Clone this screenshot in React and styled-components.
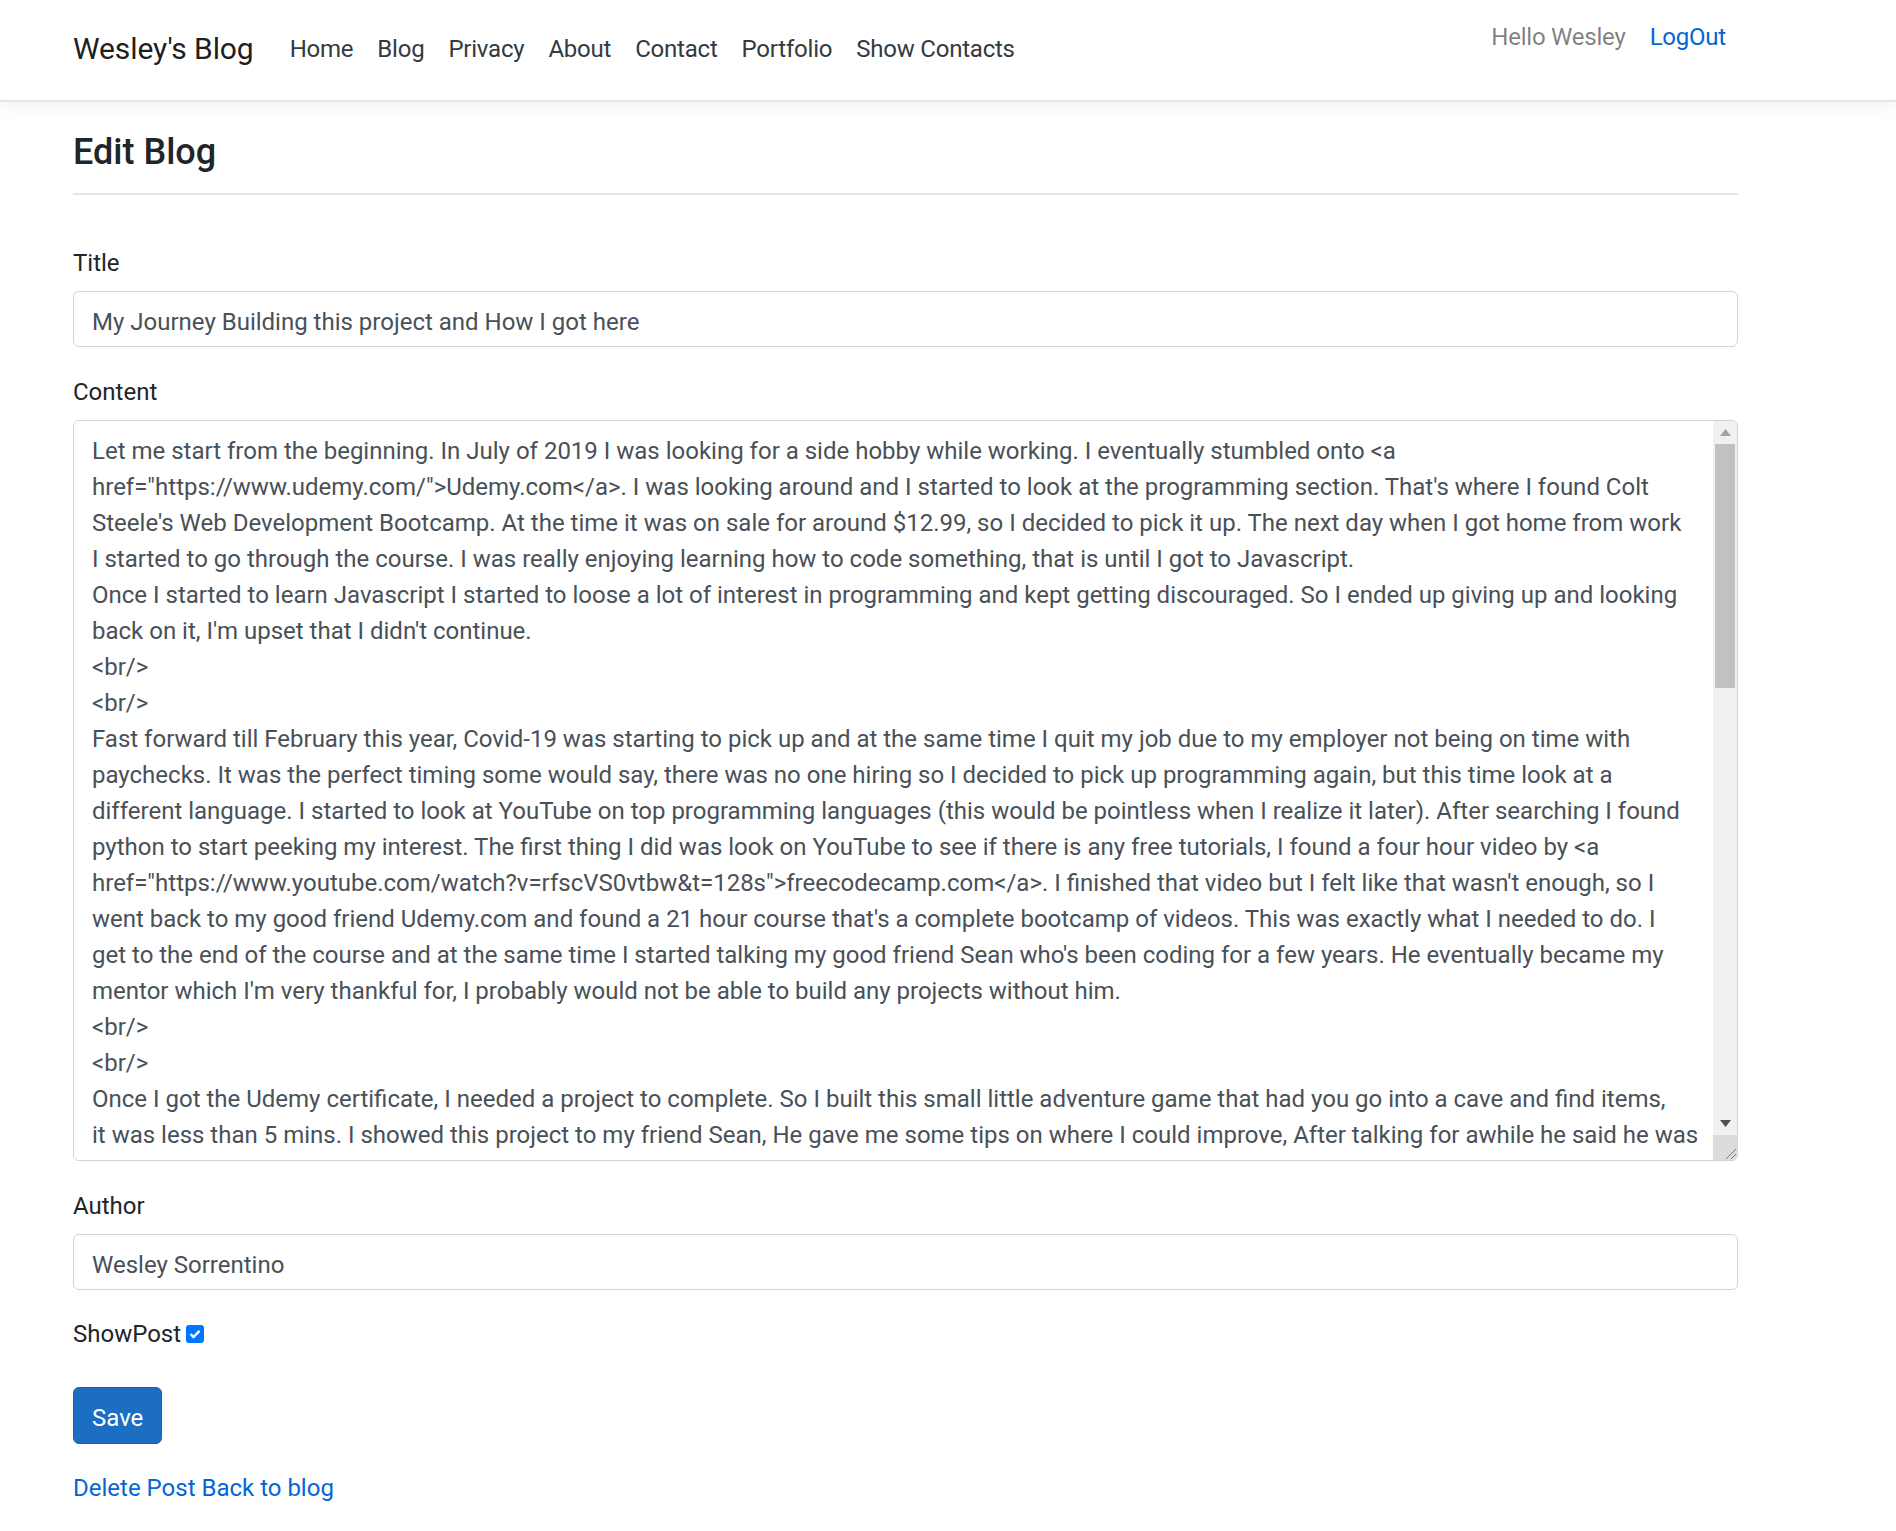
import React from "react";
import styled, { createGlobalStyle } from "styled-components";

const GlobalStyle = createGlobalStyle`
  body {
    margin: 0;
    background: #fff;
    color: #212529;
    font-family: Roboto, "Segoe UI", "Noto Sans", Arial, sans-serif;
    font-size: 24px;
    line-height: 1.5;
  }
  * { box-sizing: border-box; }
`;

const blogText = [
  `Let me start from the beginning. In July of 2019 I was looking for a side hobby while working. I eventually stumbled onto <a`,
  `href="https://www.udemy.com/">Udemy.com</a>. I was looking around and I started to look at the programming section. That's where I found Colt`,
  `Steele's Web Development Bootcamp. At the time it was on sale for around $12.99, so I decided to pick it up. The next day when I got home from work`,
  `I started to go through the course. I was really enjoying learning how to code something, that is until I got to Javascript.`,
  `Once I started to learn Javascript I started to loose a lot of interest in programming and kept getting discouraged. So I ended up giving up and looking`,
  `back on it, I'm upset that I didn't continue.`,
  `<br/>`,
  `<br/>`,
  `Fast forward till February this year, Covid-19 was starting to pick up and at the same time I quit my job due to my employer not being on time with`,
  `paychecks. It was the perfect timing some would say, there was no one hiring so I decided to pick up programming again, but this time look at a`,
  `different language. I started to look at YouTube on top programming languages (this would be pointless when I realize it later). After searching I found`,
  `python to start peeking my interest. The first thing I did was look on YouTube to see if there is any free tutorials, I found a four hour video by <a`,
  `href="https://www.youtube.com/watch?v=rfscVS0vtbw&t=128s">freecodecamp.com</a>. I finished that video but I felt like that wasn't enough, so I`,
  `went back to my good friend Udemy.com and found a 21 hour course that's a complete bootcamp of videos. This was exactly what I needed to do. I`,
  `get to the end of the course and at the same time I started talking my good friend Sean who's been coding for a few years. He eventually became my`,
  `mentor which I'm very thankful for, I probably would not be able to build any projects without him.`,
  `<br/>`,
  `<br/>`,
  `Once I got the Udemy certificate, I needed a project to complete. So I built this small little adventure game that had you go into a cave and find items,`,
  `it was less than 5 mins. I showed this project to my friend Sean, He gave me some tips on where I could improve, After talking for awhile he said he was`,
].join("\n");

const navLinks = ["Home", "Blog", "Privacy", "About", "Contact", "Portfolio", "Show Contacts"];

const Navbar = styled.header`
  height: 102px;
  background: #fff;
  border-bottom: 2px solid #e5e5e5;
  box-shadow: 0 6px 18px rgba(0, 0, 0, 0.05);
`;

const NavInner = styled.nav`
  width: 1665px;
  margin-left: 73px;
  display: flex;
  align-items: flex-start;
`;

const Brand = styled.a`
  margin-top: 26px;
  margin-right: 24px;
  font-size: 30px;
  line-height: 45px;
  letter-spacing: -0.1px;
  color: rgba(0, 0, 0, 0.9);
  text-decoration: none;
  white-space: nowrap;
`;

const NavList = styled.ul`
  display: flex;
  list-style: none;
  margin: 31px 0 0;
  padding: 0;
`;

const NavLink = styled.a`
  display: block;
  padding: 0 12px;
  line-height: 36px;
  letter-spacing: -0.22px;
  color: ${(p) => p.$color || "#343a40"};
  text-decoration: none;
  white-space: nowrap;
`;

const UserArea = styled.div`
  margin-left: auto;
  margin-top: 19px;
  display: flex;
`;

const Main = styled.main`
  width: 1665px;
  margin-left: 73px;
  padding-top: 27px;
  padding-bottom: 40px;
`;

const Heading = styled.h4`
  margin: 0;
  padding-top: 2px;
  font-size: 36px;
  line-height: 43px;
  font-weight: 500;
`;

const Rule = styled.hr`
  margin: 19px 0 49px;
  border: 0;
  border-top: 2px solid rgba(0, 0, 0, 0.1);
`;

const FormGroup = styled.div`
  margin-bottom: ${(p) => p.$mb || 26}px;
`;

const Label = styled.label`
  display: block;
  padding-top: 1px;
  margin-bottom: 10px;
  line-height: 36px;
`;

const Input = styled.input`
  display: block;
  width: 100%;
  height: 56px;
  padding: 12px 18px 6px;
  font: inherit;
  line-height: 36px;
  color: #495057;
  background: #fff;
  border: 1px solid #ced4da;
  border-radius: 6px;
  outline: none;
`;

const AreaBox = styled.div`
  display: flex;
  height: 741px;
  border: 1px solid #ced4da;
  border-radius: 6px;
  overflow: hidden;
`;

const TextArea = styled.textarea`
  flex: 1;
  min-width: 0;
  padding: 12px 18px 6px;
  border: 0;
  resize: none;
  outline: none;
  overflow: hidden;
  white-space: pre;
  font: inherit;
  line-height: 36px;
  color: #495057;
  background: #fff;
`;

const ScrollBar = styled.div`
  width: 24px;
  display: flex;
  flex-direction: column;
  background: #f1f1f1;
`;

const ScrollButton = styled.div`
  height: 23px;
  display: flex;
  align-items: center;
  justify-content: center;
`;

const ScrollTrack = styled.div`
  flex: 1;
  padding: 0 2px;
`;

const Thumb = styled.div`
  height: 244px;
  background: #c1c1c1;
`;

const Resizer = styled.div`
  height: 25px;
  background: #dcdcdc;
  display: flex;
  align-items: flex-end;
  justify-content: flex-end;
`;

const CheckRow = styled.div`
  display: flex;
  align-items: center;
  line-height: 36px;
  margin-bottom: 35px;
`;

const CheckBox = styled.span`
  width: 18px;
  height: 18px;
  margin-left: 5px;
  border-radius: 3px;
  background: #0075ff;
  display: flex;
  align-items: center;
  justify-content: center;
`;

const SaveButton = styled.button`
  display: block;
  height: 57px;
  padding: 11px 18px 7px;
  font: inherit;
  line-height: 36px;
  color: #fff;
  background: #1b6ec2;
  border: 1px solid #1861ac;
  border-radius: 6px;
  margin-bottom: 26px;
`;

const Links = styled.div`
  line-height: 36px;
`;

const TextLink = styled.a`
  color: #0366d6;
  text-decoration: none;
`;

const Arrow = ({ up }) => (
  <svg width="11" height="7" viewBox="0 0 11 7">
    <polygon
      points={up ? "5.5,0 11,7 0,7" : "0,0 11,0 5.5,7"}
      fill={up ? "#a3a3a3" : "#505050"}
    />
  </svg>
);

export default function App() {
  return (
    <>
      <GlobalStyle />
      <Navbar>
        <NavInner>
          <Brand href="#">Wesley's Blog</Brand>
          <NavList>
            {navLinks.map((l) => (
              <li key={l}>
                <NavLink href="#">{l}</NavLink>
              </li>
            ))}
          </NavList>
          <UserArea>
            <NavLink $color="rgba(0,0,0,0.5)">Hello Wesley</NavLink>
            <NavLink href="#" $color="#0366d6">LogOut</NavLink>
          </UserArea>
        </NavInner>
      </Navbar>
      <Main>
        <Heading>Edit Blog</Heading>
        <Rule />
        <FormGroup>
          <Label>Title</Label>
          <Input defaultValue="My Journey Building this project and How I got here" />
        </FormGroup>
        <FormGroup>
          <Label>Content</Label>
          <AreaBox>
            <TextArea wrap="off" defaultValue={blogText} />
            <ScrollBar>
              <ScrollButton>
                <Arrow up />
              </ScrollButton>
              <ScrollTrack>
                <Thumb />
              </ScrollTrack>
              <ScrollButton>
                <Arrow />
              </ScrollButton>
              <Resizer>
                <svg width="14" height="14" viewBox="0 0 14 14">
                  <line x1="13" y1="3" x2="3" y2="13" stroke="#777" strokeWidth="1" />
                  <line x1="13" y1="8" x2="8" y2="13" stroke="#777" strokeWidth="1" />
                </svg>
              </Resizer>
            </ScrollBar>
          </AreaBox>
        </FormGroup>
        <FormGroup>
          <Label>Author</Label>
          <Input defaultValue="Wesley Sorrentino" />
        </FormGroup>
        <CheckRow>
          ShowPost
          <CheckBox>
            <svg width="12" height="10" viewBox="0 0 12 10">
              <polyline points="1.5,5.2 4.5,8 10.5,1.8" fill="none" stroke="#fff" strokeWidth="2.4" />
            </svg>
          </CheckBox>
        </CheckRow>
        <SaveButton>Save</SaveButton>
        <Links>
          <TextLink href="#">Delete Post</TextLink> <TextLink href="#">Back to blog</TextLink>
        </Links>
      </Main>
    </>
  );
}
